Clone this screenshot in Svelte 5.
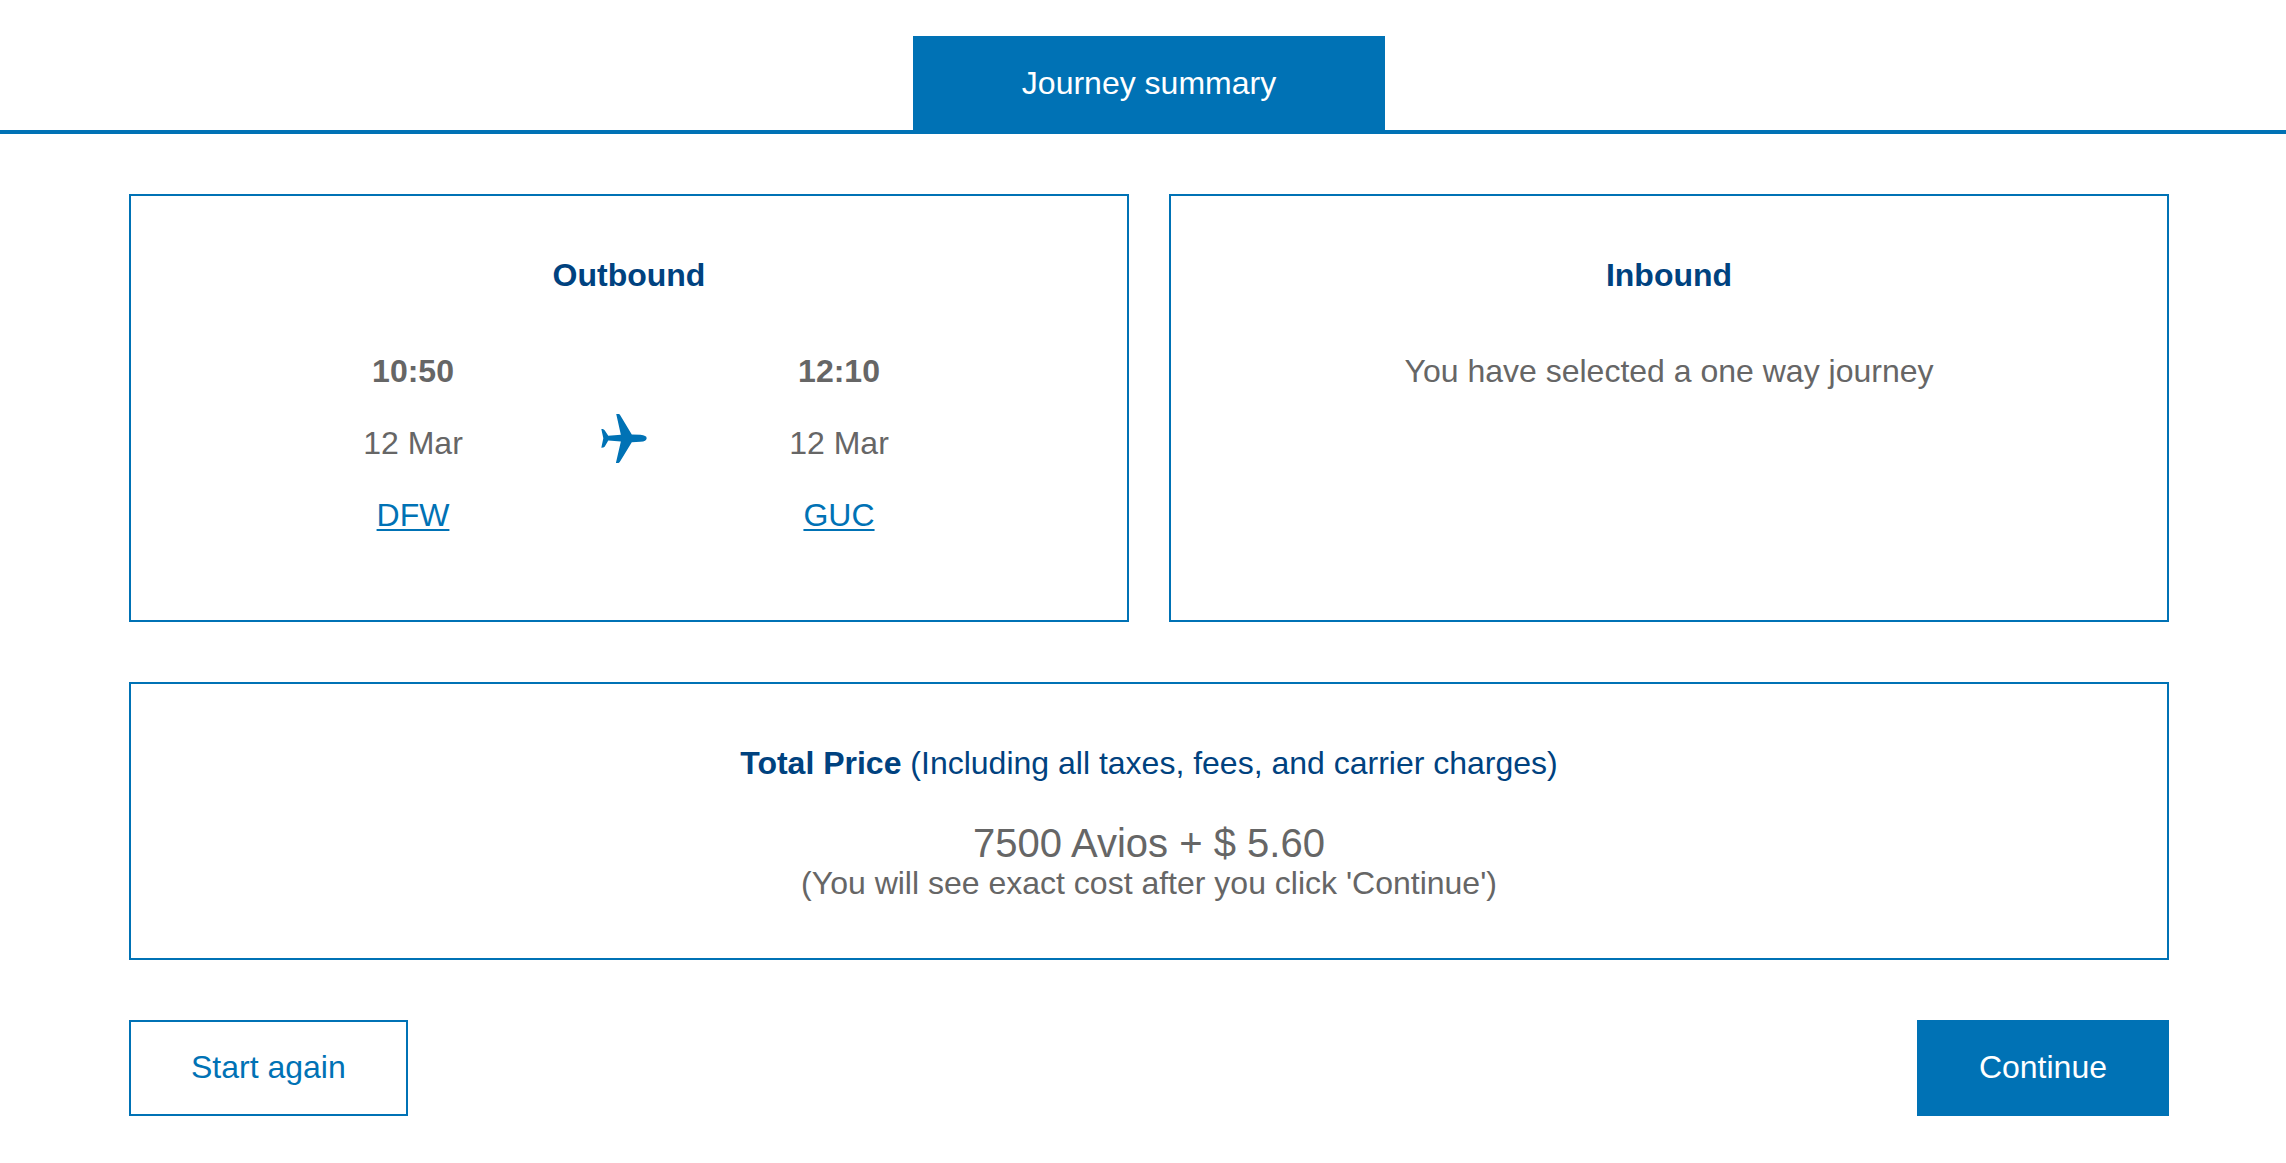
<script>
  const stops = {
    from: { time: '10:50', date: '12 Mar', airport: 'DFW' },
    to: { time: '12:10', date: '12 Mar', airport: 'GUC' }
  };
</script>

{#snippet stop(s)}
  <div class="stop">
    <strong>{s.time}</strong>
    <span>{s.date}</span>
    <a href="#{s.airport}">{s.airport}</a>
  </div>
{/snippet}

<header class="tabs">
  <h1 class="tab">Journey summary</h1>
</header>

<main>
  <div class="journeys">
    <section class="card">
      <h2>Outbound</h2>
      <div class="flight">
        {@render stop(stops.from)}
        <svg class="plane" viewBox="64 42 139 148" aria-hidden="true">
          <path d="M110 42 L118 42 Q121 43 123 47 L157 104 L183 105 Q202 107 202 115 Q202 124 183 126 L157 127 L123 183 Q120 189 117 190 L109 190 L124 125 L86 122 L75 141 Q72 144 65 144 L71 115 L65 87 L69 87 Q73 88 75 91 L86 108 L124 105 Z" />
        </svg>
        {@render stop(stops.to)}
      </div>
    </section>
    <section class="card">
      <h2>Inbound</h2>
      <p class="note">You have selected a one way journey</p>
    </section>
  </div>

  <section class="card price">
    <h2>Total Price <span>(Including all taxes, fees, and carrier charges)</span></h2>
    <p class="amount">7500 Avios + $ 5.60</p>
    <p>(You will see exact cost after you click 'Continue')</p>
  </section>

  <div class="actions">
    <button type="button">Start again</button>
    <button type="button" class="primary">Continue</button>
  </div>
</main>

<style>
  :global(body) {
    margin: 0;
    background: #fff;
    color: #666;
    font: 32px/36px "Liberation Sans", Arial, sans-serif;
  }

  h1, h2, p {
    margin: 0;
    font-size: 32px;
  }

  .tabs {
    display: flex;
    justify-content: center;
    padding: 36px 117px 0 129px;
    border-bottom: 4px solid #0072b5;
  }

  .tab {
    box-sizing: border-box;
    width: 472px;
    padding: 29px 0;
    background: #0072b5;
    color: #fff;
    font-weight: 400;
    text-align: center;
  }

  main {
    display: flex;
    flex-direction: column;
    gap: 60px;
    padding: 60px 117px 47px 129px;
  }

  .journeys {
    display: grid;
    grid-template-columns: 1fr 1fr;
    gap: 40px;
  }

  .card {
    padding: 61px 40px;
    border: 2px solid #0072b5;
    text-align: center;
  }

  h2 {
    color: #00427f;
    font-weight: 700;
  }

  h2 span {
    font-weight: 400;
  }

  .flight {
    display: grid;
    grid-template-columns: repeat(3, 213px);
    justify-content: center;
    align-items: center;
    justify-items: center;
    padding: 42px 6px 8px 0;
  }

  .stop {
    display: flex;
    flex-direction: column;
    line-height: 72px;
  }

  a {
    color: #0072b5;
    text-underline-offset: 3px;
    text-decoration-thickness: 2px;
  }

  .plane {
    width: 46px;
    height: 49px;
    margin: 0 4px 10px 0;
    fill: #0072b5;
  }

  .note {
    padding-top: 42px;
    line-height: 72px;
  }

  .price {
    padding: 61px 40px 57px;
  }

  .amount {
    padding-top: 40px;
    font-size: 40px;
    line-height: 44px;
  }

  .actions {
    display: flex;
    justify-content: space-between;
  }

  button {
    padding: 27px 60px 29px;
    border: 2px solid #0072b5;
    background: #fff;
    color: #0072b5;
    font: inherit;
    cursor: pointer;
  }

  .primary {
    background: #0072b5;
    color: #fff;
  }
</style>
